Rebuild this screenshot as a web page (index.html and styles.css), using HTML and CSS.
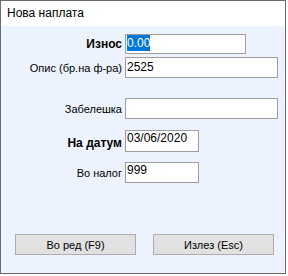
FILE: index.html
```html
<!DOCTYPE html>
<html lang="mk">
<head>
  <meta charset="UTF-8" />
  <title>Нова наплата</title>
  <link rel="stylesheet" href="styles.css">
</head>
<body>

  <div class="window">
    <div class="titlebar">Нова наплата</div>

    <div class="content">
      <div class="row row-iznos">
        <label class="lbl bold">Износ</label>
        <div class="field w-mid"><span class="sel">0.00</span></div>
      </div>

      <div class="row row-opis">
        <label class="lbl">Опис (бр.на ф-ра)</label>
        <div class="field w-long">2525</div>
      </div>

      <div class="row row-zab">
        <label class="lbl">Забелешка</label>
        <div class="field w-long"></div>
      </div>

      <div class="row row-datum">
        <label class="lbl bold low">На датум</label>
        <div class="field w-short tall">03/06/2020</div>
      </div>

      <div class="row row-nalog">
        <label class="lbl">Во налог</label>
        <div class="field w-short top">999</div>
      </div>

      <div class="buttons">
        <button class="btn">Во ред (F9)</button>
        <button class="btn">Излез (Esc)</button>
      </div>
    </div>
  </div>

</body>
</html>
```

FILE: styles.css
```css
body {
  margin: 0;
  background: #ffffff;
  font-family: "Liberation Sans", Arial, sans-serif;
  font-size: 11px;
  color: #000;
}

.window {
  width: 286px;
  height: 274px;
  box-sizing: border-box;
  border: 1px solid #6b6b6b;
  display: flex;
  flex-direction: column;
}

.titlebar {
  height: 25px;
  flex: none;
  background: #fff;
  padding-left: 6px;
  line-height: 24px;
  font-size: 12px;
}

.content {
  flex: 1;
  background: #ecf3fe;
  display: flex;
  flex-direction: column;
}

.row {
  display: flex;
  align-items: center;
}

.lbl {
  width: 121px;
  margin-right: 3px;
  text-align: right;
  flex: none;
}

.bold {
  font-weight: bold;
  font-size: 12px;
}

.low {
  margin-top: 4px;
}

.field {
  box-sizing: border-box;
  height: 21px;
  background: #fff;
  border: 1px solid #9d9d9d;
  padding: 2px 1px;
  font-size: 12px;
  line-height: 15px;
  white-space: nowrap;
}

.w-mid { width: 121px; height: 20px; padding-top: 1px; }
.w-long { width: 153px; }
.w-short { width: 74px; }
.tall { height: 22px; padding-top: 0; }
.top { padding-top: 0; }

.sel {
  background: #0078d7;
  color: #fff;
  padding: 1px 0;
}

.row-iznos { margin-top: 8px; }
.row-opis { margin-top: 3px; }
.row-zab { margin-top: 20px; }
.row-datum { margin-top: 11px; }
.row-nalog { margin-top: 10px; }

.buttons {
  display: flex;
  gap: 17px;
  margin-top: 51px;
  padding-left: 14px;
}

.btn {
  width: 121px;
  height: 21px;
  background: #e1e1e1;
  border: 1px solid #adadad;
  font-family: "Liberation Sans", Arial, sans-serif;
  font-size: 11px;
  color: #000;
  padding: 0;
}
```
